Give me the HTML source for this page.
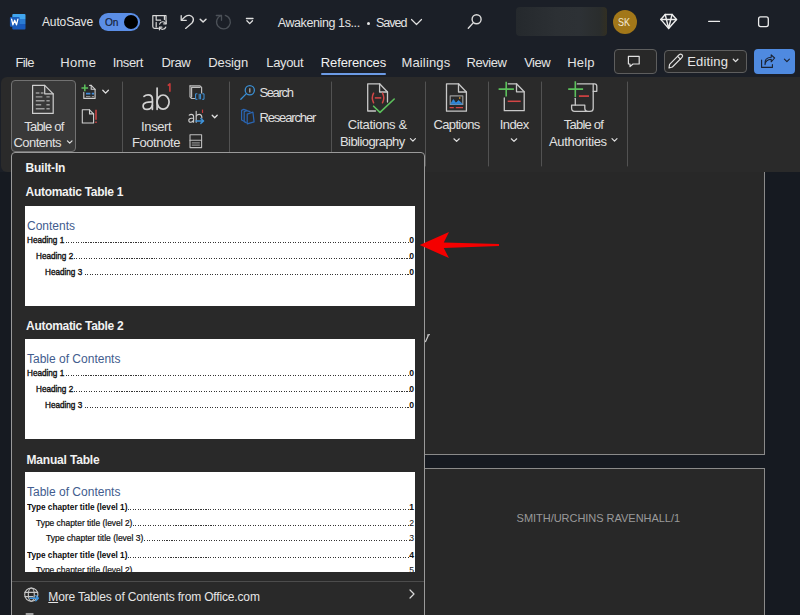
<!DOCTYPE html>
<html><head><meta charset="utf-8">
<style>
*{margin:0;padding:0;box-sizing:border-box}
html,body{width:800px;height:615px;overflow:hidden;background:#1b1f27;font-family:"Liberation Sans",sans-serif;color:#e8e8e8}
.a{position:absolute}
.t{position:absolute;white-space:nowrap;line-height:1}
.tab{position:absolute;white-space:nowrap;line-height:1;font-size:13px;color:#e4e4e4;top:56px}
.rb{position:absolute;white-space:nowrap;line-height:1;font-size:13px;color:#e0e0e0}
.hd{position:absolute;white-space:nowrap;line-height:1;font-size:12px;font-weight:bold;color:#f2f2f2;letter-spacing:-0.2px}
.thumb{position:absolute;left:25px;width:390px;height:100px;background:#fff;overflow:hidden}
.ttl{position:absolute;left:2px;top:14px;font-size:12px;line-height:1;color:#425c8e;white-space:nowrap}
.lbl{position:absolute;font-size:8.6px;line-height:1;color:#0c0c0c;white-space:nowrap;transform-origin:0 0}
.dots{position:absolute;right:5.5px;height:1px;background:repeating-linear-gradient(90deg,#333 0,#333 1px,transparent 1px,transparent 2.5px)}
.num{position:absolute;right:1px;font-size:8.6px;line-height:1;color:#111}
svg{position:absolute;overflow:visible}
</style></head><body>

<!-- title bar -->
<div id="t_autosave1" class="t" style="left:42.00px;top:16px;font-size:12px;color:#e6e6e6;letter-spacing:-0.14px">AutoSave</div>
<div class="a" style="left:99px;top:13px;width:41px;height:18px;border-radius:9px;background:#5b8ee6"></div>
<div id="t_on1" class="t" style="left:104.6px;top:17px;font-size:11px;color:#16223a;transform:scaleX(0.92);transform-origin:0 0;-webkit-text-stroke:0.2px #16223a">On</div>
<div class="a" style="left:124px;top:15px;width:13.5px;height:13.5px;border-radius:7px;background:#000"></div>
<div id="t_awakening11" class="t" style="left:277.70px;top:17px;font-size:12.5px;color:#e4e4e4;letter-spacing:-0.40px">Awakening 1s...</div>
<div class="a" style="left:366.8px;top:21.8px;width:3.4px;height:3.4px;border-radius:2px;background:#e4e4e4"></div>
<div id="t_saved1" class="t" style="left:376.00px;top:17px;font-size:12.5px;color:#e4e4e4;letter-spacing:-1.00px">Saved</div>
<div class="a" style="left:516px;top:7px;width:91px;height:29px;border-radius:4px;background:linear-gradient(90deg,#25292d,#2c3034 45%,#2d3135 70%,#2a2d2d 92%,#322f22)"></div>
<div class="a" style="left:612.5px;top:9.5px;width:24.7px;height:24.7px;border-radius:50%;background:#a27719"></div>
<div id="t_sk1" class="t" style="left:618.2px;top:17px;font-size:10.5px;color:#f3ead6;transform:scaleX(0.86);transform-origin:0 0">SK</div>

<!-- tabs -->
<div id="tab_file1" class="tab" style="left:15.50px;letter-spacing:-0.67px">File</div>
<div id="tab_home1" class="tab" style="left:60.25px;letter-spacing:0.33px">Home</div>
<div id="tab_insert1" class="tab" style="left:112.75px;letter-spacing:-0.40px">Insert</div>
<div id="tab_draw1" class="tab" style="left:161.50px;letter-spacing:-0.42px">Draw</div>
<div id="tab_design1" class="tab" style="left:208.25px;letter-spacing:-0.10px">Design</div>
<div id="tab_layout1" class="tab" style="left:266.25px;letter-spacing:-0.35px">Layout</div>
<div id="tab_references1" class="tab" style="left:320.75px;color:#f2f2f2;letter-spacing:-0.11px">References</div>
<div class="a" style="left:321px;top:72.5px;width:65px;height:2px;border-radius:1px;background:#6c9be6"></div>
<div id="tab_mailings1" class="tab" style="left:401.50px;letter-spacing:0.14px">Mailings</div>
<div id="tab_review1" class="tab" style="left:466.50px;letter-spacing:-0.46px">Review</div>
<div id="tab_view1" class="tab" style="left:524.20px;letter-spacing:-0.50px">View</div>
<div id="tab_help1" class="tab" style="left:567.20px;letter-spacing:0.17px">Help</div>

<!-- right side buttons -->
<div class="a" style="left:614px;top:49px;width:43px;height:25px;border:1px solid #5e5e5e;border-radius:4px;background:#282828"></div>
<div class="a" style="left:664px;top:50px;width:83px;height:23px;border:1px solid #5e5e5e;border-radius:4px;background:#282828"></div>
<div id="t_editing1" class="t" style="left:687.20px;top:54.60px;font-size:13px;color:#e6e6e6;letter-spacing:0.17px">Editing</div>
<div class="a" style="left:754px;top:49px;width:41px;height:25px;border-radius:4px;background:#4f8ae0"></div>

<!-- ribbon -->
<div class="a" style="left:1px;top:77px;width:820px;height:95px;border-radius:6px 0 0 6px;background:#2a2a2a"></div>
<div class="a" style="left:11px;top:80px;width:65px;height:72px;border:1px solid #727272;border-radius:4px;background:#393939"></div>
<div id="rb_tableof1" class="rb" style="left:24.20px;top:120px;letter-spacing:-0.77px">Table of</div>
<div id="rb_contents1" class="rb" style="left:13.50px;top:136px;letter-spacing:-0.57px">Contents</div>
<div id="rb_insert2" class="rb" style="left:141.10px;top:120px;letter-spacing:-0.40px">Insert</div>
<div id="rb_footnote1" class="rb" style="left:131.90px;top:136px;letter-spacing:-0.40px">Footnote</div>
<div id="rb_search1" class="rb" style="left:259.40px;top:86px;letter-spacing:-1.34px">Search</div>
<div id="rb_researcher1" class="rb" style="left:259.40px;top:111px;letter-spacing:-1.14px">Researcher</div>
<div id="rb_citations1" class="rb" style="left:347.70px;top:118px;letter-spacing:-0.34px">Citations &amp;</div>
<div id="rb_bibliograp1" class="rb" style="left:340.00px;top:135px;letter-spacing:-0.57px">Bibliography</div>
<div id="rb_captions1" class="rb" style="left:433.40px;top:118px;letter-spacing:-0.62px">Captions</div>
<div id="rb_index1" class="rb" style="left:499.80px;top:118px;letter-spacing:-0.61px">Index</div>
<div id="rb_tableof2" class="rb" style="left:563.80px;top:118px;letter-spacing:-0.79px">Table of</div>
<div id="rb_authoritie1" class="rb" style="left:549.00px;top:135px;letter-spacing:-0.33px">Authorities</div>

<svg width="800" height="615" style="left:0;top:0" fill="none" stroke-linecap="round" stroke-linejoin="round">
<!-- ribbon: TOC doc -->
<g stroke="#cfcfcf" stroke-width="1.2">
<path d="M44.7,85.3 L32.6,85.3 L32.6,113.4 L53.2,113.4 L53.2,93.8 Z"/>
<path d="M44.7,85.3 L44.7,93.8 L53.2,93.8"/>
</g>
<g stroke="#9c9c9c" stroke-width="1.4" stroke-linecap="butt">
<path d="M35.8,93 L39.4,93 M40.8,93 L43.5,93"/>
<path d="M35.8,96.9 L42.4,96.9 M46.4,96.9 L49.7,96.9"/>
<path d="M35.8,100.8 L44.6,100.8 M46.4,100.8 L49.7,100.8"/>
<path d="M35.8,104.7 L41.2,104.7 M46.4,104.7 L49.7,104.7"/>
<path d="M35.8,108.8 L44.6,108.8 M46.4,108.8 L49.7,108.8"/>
</g>
<!-- add text icon -->
<g stroke="#cfcfcf" stroke-width="1.1">
<path d="M89.6,85.4 L91.2,85.4 L95.1,89.3 L95.1,98.4 L83.8,98.4 L83.8,92.4"/>
<path d="M91.2,85.4 L91.2,89.3 L95.1,89.3"/>
</g>
<path d="M86,93.6 L90.4,93.6 M91.8,93.6 L94,93.6" stroke="#3f8ad8" stroke-width="1.8" stroke-linecap="butt"/><path d="M86,96.6 L90.4,96.6 M91.8,96.6 L94,96.6" stroke="#9a9a9a" stroke-width="1" stroke-linecap="butt"/>
<path d="M84.8,84.6 L84.8,91.2 M81.5,87.9 L88.1,87.9" stroke="#5cc05c" stroke-width="1.5" stroke-linecap="butt"/>
<path d="M102.8,90.3 L105.6,93.1 L108.4,90.3" stroke="#e0e0e0" stroke-width="1.3"/>
<!-- update table -->
<g stroke="#cfcfcf" stroke-width="1.1">
<path d="M82.3,109.8 L89.5,109.8 L93.6,113.9 L93.6,123 L82.3,123 Z"/>
<path d="M89.5,109.8 L89.5,113.9 L93.6,113.9"/>
</g>
<path d="M96,109.8 L96,119.8 M96,121.6 L96,123" stroke="#e04545" stroke-width="1.4" stroke-linecap="butt"/>
<!-- separators -->
<g stroke="#525252" stroke-width="1">
<path d="M122.5,82 L122.5,166 M229.5,82 L229.5,166 M331.5,82 L331.5,166 M425.5,82 L425.5,166 M488.5,82 L488.5,166 M541.5,82 L541.5,166 M627.5,82 L627.5,166"/>
</g>
<!-- ab footnote -->
<g stroke="#d2d2d2" stroke-width="1.7">
<path d="M144,96.4 C145.2,95.3 146.6,94.9 148.1,94.9 C151,94.9 152.4,96.6 152.4,99.4 L152.4,109.3"/>
<path d="M152.4,101.9 L148.4,102.1 C145,102.4 143.1,103.6 143.1,106 C143.1,108.1 144.8,109.4 147.1,109.4 C149.8,109.4 151.7,107.6 152.4,105.2"/>
<path d="M157.1,88.1 L157.1,109.3"/>
<ellipse cx="163.1" cy="102.1" rx="6" ry="7.1"/>
</g>
<path d="M167.8,85.6 L169.9,83.8 L169.9,91.8" stroke="#c83a3a" stroke-width="1.6" stroke-linecap="butt"/>
<!-- insert endnote -->
<g stroke="#bdbdbd" stroke-width="1.2">
<path d="M190,85.8 L200,85.8 L201.6,87.4 L201.6,93"/>
<path d="M190,85.8 L190,96.8 L191.7,98.5 L194.5,98.5"/>
<path d="M191.6,87.4 L200,87.4 M191.6,87.4 L191.6,97"/>
</g>
<g stroke="#3f94dc" stroke-width="1.0" stroke-linecap="butt">
<path d="M197.4,93.8 L195.6,93.8 L195.6,99.3 L197.4,99.3"/>
<path d="M199.2,93.8 L199.2,99.3 M200.6,93.8 L200.6,99.3"/>
<path d="M202.2,93.8 L204,93.8 L204,99.3 L202.2,99.3"/>
</g>
<!-- next footnote ab -->
<g stroke="#cfcfcf" stroke-width="1.1">
<path d="M189.2,115.2 C189.8,114.6 190.5,114.4 191.3,114.4 C192.8,114.4 193.6,115.3 193.6,116.8 L193.6,122.2"/>
<path d="M193.6,118.2 L191.4,118.3 C189.6,118.5 188.8,119.2 188.8,120.4 C188.8,121.5 189.7,122.2 190.9,122.2 C192.4,122.2 193.3,121.2 193.6,120"/>
<path d="M196.2,111.4 L196.2,122.2"/>
<path d="M196.3,116 C197,114.9 198,114.4 199.1,114.4 C200.9,114.4 201.9,115.8 201.9,118"/>
</g>
<path d="M202.5,109.6 L202.5,113" stroke="#c83a3a" stroke-width="1.2" stroke-linecap="butt"/>
<g stroke="#3f94dc" stroke-width="1.4">
<path d="M196,121 L203.6,121 M200.8,118.4 L203.6,121 L200.8,123.4"/>
</g>
<path d="M212.2,115.2 L214.7,117.8 L217.2,115.2" stroke="#e0e0e0" stroke-width="1.3"/>
<!-- show notes -->
<g stroke="#bdbdbd" stroke-width="1.1">
<rect x="190" y="134.8" width="11.6" height="12.8"/>
<path d="M190,140.3 L201.6,140.3"/>
</g>
<path d="M191.8,142.9 L199.8,142.9 M191.8,145.2 L199.8,145.2" stroke="#8a8a8a" stroke-width="1.2" stroke-linecap="butt"/>
<!-- search ribbon -->
<g stroke="#3a8fd4" stroke-width="1.3">
<circle cx="249.8" cy="90.2" r="4.6"/>
<path d="M246.4,93.6 L240.8,99.2"/>
</g>
<path d="M249.8,88.2 L249.8,92.6" stroke="#a8a8a8" stroke-width="1.3" stroke-linecap="butt"/>
<!-- researcher -->
<g stroke="#2a66b4" stroke-width="1.2">
<path d="M243.6,121 L241.6,120 L241.6,110.4 L243.8,109.4 L246.6,110.4"/>
<path d="M246.2,122.6 L244.2,121.6 L244.2,111.6 L246.6,110.6 L250,111.6"/>
<path d="M247.2,114.1 L252.9,112.1 L254.1,121.9 L247.2,123.9 Z"/>
</g>
<!-- citations -->
<g stroke="#c8c8c8" stroke-width="1.3">
<path d="M375.5,111 L367.7,111 L367.7,83.8 L379.6,83.8 L387.5,92 L387.5,102"/>
<path d="M379.6,83.8 L379.6,92 L387.5,92"/>
</g>
<g stroke="#d44646" stroke-width="1.5">
<path d="M373.6,93.2 Q371,98 373.6,102.8"/>
<path d="M382.5,93.2 Q385.1,98 382.5,102.8"/>
<path d="M374.8,97.9 L381.3,97.9" stroke-linecap="butt"/>
</g>
<path d="M373.6,106.2 L380,112.4 L394.2,99" stroke="#5cc05c" stroke-width="1.6"/>
<!-- captions -->
<g stroke="#c8c8c8" stroke-width="1.3">
<path d="M458.5,83.8 L446.5,83.8 L446.5,111.2 L466.4,111.2 L466.4,92 Z"/>
<path d="M458.5,83.8 L458.5,92 L466.4,92"/>
<rect x="450.2" y="95.8" width="12.6" height="8.6" stroke="#9a9a9a" stroke-width="1.2"/>
</g>
<path d="M450.8,103.8 L453.4,99.6 L456.2,103.8 Z M455.2,103.8 L458.6,100.6 L462.2,103.8 Z" fill="#2f88da" stroke="#2f88da" stroke-width="0.8"/>
<path d="M459.8,97 L459.8,99" stroke="#e0a030" stroke-width="1" stroke-linecap="butt"/>
<path d="M449.6,107.6 L453.8,107.6 M455.8,107.6 L463,107.6" stroke="#d44646" stroke-width="1.2" stroke-linecap="butt"/>
<!-- index -->
<g stroke="#c8c8c8" stroke-width="1.3">
<path d="M508.2,83.8 L516.5,83.8 L524.2,91.8 L524.2,110.7 L504.3,110.7 L504.3,98"/>
<path d="M516.5,83.8 L516.5,91.8 L524.2,91.8"/>
</g>
<path d="M498.6,89.1 L513.9,89.1 M506.2,81.7 L506.2,96.5" stroke="#5cc05c" stroke-width="1.6" stroke-linecap="butt"/>
<path d="M507.7,101.3 L520.7,101.3" stroke="#d44646" stroke-width="1.5" stroke-linecap="butt"/>
<!-- TOA -->
<g stroke="#c8c8c8" stroke-width="1.3">
<path d="M577.3,83.9 L594.6,83.9 C596.2,83.9 596.8,85 596.8,86.5 L596.8,91.3 L593.2,91.3"/>
<path d="M593.2,84.2 L593.2,108.4 C593.2,110.4 591.8,111.3 590,111.3 L574.6,111.3 C572.6,111.3 571.6,110 571.6,108 L571.6,105.1 L584.8,105.1 L584.8,108.2 C584.8,110.2 586.2,111.3 588,111.3"/>
<path d="M575.3,98.3 L575.3,105"/>
</g>
<path d="M568.2,89.1 L583.1,89.1 M575.3,81.3 L575.3,96.9" stroke="#5cc05c" stroke-width="1.6" stroke-linecap="butt"/>
<path d="M578.9,96.1 L589,96.1" stroke="#c84040" stroke-width="1.8" stroke-linecap="butt"/>
<!-- ribbon chevrons -->
<g stroke="#e0e0e0" stroke-width="1.2">
<path d="M67.4,140.9 L69.7,143.2 L72,140.9"/>
<path d="M410.4,138.7 L412.9,141.2 L415.4,138.7"/>
<path d="M453.9,138.8 L456.6,141.4 L459.3,138.8"/>
<path d="M511.3,138.8 L514,141.4 L516.7,138.8"/>
<path d="M612,138.7 L614.5,141.2 L617,138.7"/>
</g>
</svg>

<!-- document area -->
<div class="a" style="left:0;top:172px;width:800px;height:443px;background:#161a21"></div>
<div class="a" style="left:300px;top:172px;width:465px;height:283px;background:#282828;border-right:1px solid #8a8a8a;border-bottom:1px solid #8a8a8a"></div>
<div class="a" style="left:300px;top:468px;width:465px;height:160px;background:#282828;border:1px solid #8a8a8a"></div>
<div id="t_smithurchi1" class="t" style="left:516.60px;top:513.00px;font-size:11px;color:#9a9a9a;letter-spacing:-0.03px">SMITH/URCHINS RAVENHALL/1</div>

<!-- dropdown panel -->
<div class="a" style="left:11px;top:152px;width:414px;height:470px;background:#292929;border:1px solid #9a9a9a;border-radius:4px"></div>
<div id="hd_builtin1" class="hd" style="left:25.50px;top:162px;letter-spacing:-0.21px">Built-In</div>
<div id="hd_automatict1" class="hd" style="left:25.50px;top:186px;letter-spacing:-0.28px">Automatic Table 1</div>
<div class="thumb" style="top:206px">
  <div class="ttl">Contents</div>
  <div class="lbl" style="left:2.15px;top:30.20px;font-weight:normal;-webkit-text-stroke:0.35px #111;transform:scaleX(0.95)">Heading 1</div><div class="dots" style="left:38.35px;top:36.20px"></div><div class="num" style="top:30.20px;font-weight:bold">0</div>
  <div class="lbl" style="left:11.40px;top:46.30px;font-weight:normal;-webkit-text-stroke:0.35px #111;transform:scaleX(0.95)">Heading 2</div><div class="dots" style="left:49.30px;top:52.30px"></div><div class="num" style="top:46.30px;font-weight:bold">0</div>
  <div class="lbl" style="left:20.10px;top:61.60px;font-weight:normal;-webkit-text-stroke:0.35px #111;transform:scaleX(0.95)">Heading 3</div><div class="dots" style="left:59.50px;top:67.60px"></div><div class="num" style="top:61.60px;font-weight:bold">0</div>
</div>
<div id="hd_automatict2" class="hd" style="left:26.10px;top:320px;letter-spacing:-0.31px">Automatic Table 2</div>
<div class="thumb" style="top:339px">
  <div class="ttl">Table of Contents</div>
  <div class="lbl" style="left:2.15px;top:30.20px;font-weight:normal;-webkit-text-stroke:0.35px #111;transform:scaleX(0.95)">Heading 1</div><div class="dots" style="left:38.35px;top:36.20px"></div><div class="num" style="top:30.20px;font-weight:bold">0</div>
  <div class="lbl" style="left:11.40px;top:46.30px;font-weight:normal;-webkit-text-stroke:0.35px #111;transform:scaleX(0.95)">Heading 2</div><div class="dots" style="left:49.30px;top:52.30px"></div><div class="num" style="top:46.30px;font-weight:bold">0</div>
  <div class="lbl" style="left:20.10px;top:61.60px;font-weight:normal;-webkit-text-stroke:0.35px #111;transform:scaleX(0.95)">Heading 3</div><div class="dots" style="left:59.50px;top:67.60px"></div><div class="num" style="top:61.60px;font-weight:bold">0</div>
</div>
<div id="hd_manualtabl1" class="hd" style="left:26.50px;top:454px;letter-spacing:-0.18px">Manual Table</div>
<div class="thumb" style="top:472px">
  <div class="ttl">Table of Contents</div>
  <div class="lbl" style="left:2.00px;top:31.10px;font-weight:bold;transform:scaleX(0.957)">Type chapter title (level 1)</div><div class="dots" style="left:102.60px;top:37.10px"></div><div class="num" style="top:31.10px;font-weight:bold">1</div>
  <div class="lbl" style="left:11.10px;top:46.50px;font-weight:normal;-webkit-text-stroke:0.2px #111;transform:scaleX(0.98)">Type chapter title (level 2)</div><div class="dots" style="left:107.90px;top:52.50px"></div><div class="num" style="top:46.50px;font-weight:normal">2</div>
  <div class="lbl" style="left:20.80px;top:62.30px;font-weight:normal;-webkit-text-stroke:0.2px #111;transform:scaleX(0.99)">Type chapter title (level 3)</div><div class="dots" style="left:118.80px;top:68.30px"></div><div class="num" style="top:62.30px;font-weight:normal">3</div>
  <div class="lbl" style="left:2.00px;top:78.50px;font-weight:bold;transform:scaleX(0.957)">Type chapter title (level 1)</div><div class="dots" style="left:102.60px;top:84.50px"></div><div class="num" style="top:78.50px;font-weight:bold">4</div>
  <div class="lbl" style="left:11.10px;top:94.30px;font-weight:normal;-webkit-text-stroke:0.2px #111;transform:scaleX(0.98)">Type chapter title (level 2)</div><div class="dots" style="left:107.90px;top:100.30px"></div><div class="num" style="top:94.30px;font-weight:normal">5</div>
</div>
<div class="a" style="left:12px;top:581px;width:412px;height:1px;background:#4c4c4c"></div>
<div id="t_moretables1" class="t" style="left:48.30px;top:591px;font-size:12px;color:#e6e6e6;letter-spacing:-0.16px"><u>M</u>ore Tables of Contents from Office.com</div>

<!-- icons overlay -->
<svg width="800" height="615" style="left:0;top:0" fill="none" stroke-linecap="round" stroke-linejoin="round">

<!-- word icon -->
<defs>
<linearGradient id="wg" x1="0" y1="0" x2="0" y2="1">
<stop offset="0" stop-color="#41a5ee"/><stop offset="0.33" stop-color="#41a5ee"/>
<stop offset="0.33" stop-color="#2b7cd3"/><stop offset="0.66" stop-color="#2b7cd3"/>
<stop offset="0.66" stop-color="#185abd"/><stop offset="1" stop-color="#185abd"/>
</linearGradient>
</defs>
<rect x="12.3" y="13.9" width="13.2" height="15.6" rx="1" fill="url(#wg)"/>
<rect x="9.9" y="17" width="9.7" height="9.8" rx="1" fill="#1a5cbb"/>
<path d="M11.6,19.2 L12.9,24.8 L14.7,20.2 L16.5,24.8 L17.9,19.2" stroke="#fff" stroke-width="1.3"/>
<!-- save icon -->
<g stroke="#d8d8d8" stroke-width="1.2">
<path d="M158.2,28.4 L154.6,28.4 Q152.8,28.4 152.8,26.6 L152.8,15.7 L166,15.7 L166,21"/>
<path d="M156.2,15.9 L156.2,20.2 L160.6,20.2 M164.4,15.9 L164.4,19.6 M156.2,22.4 L156.2,26.9"/>
<path d="M159.6,24.2 A3.4,3.4 0 0 1 165.9,23.6 M165.8,27 A3.4,3.4 0 0 1 159.6,27.5"/>
<path d="M166.2,21.2 L166.2,23.8 L163.7,23.8 M159.4,29.8 L159.4,27.2 L161.9,27.2"/>
</g>
<!-- undo -->
<g stroke="#dcdcdc" stroke-width="1.3">
<path d="M181.2,15.6 L181.2,20.3 L186.3,20.3"/>
<path d="M181.6,20 L185.4,16.6 C187.8,14.6 191.6,14.9 193,17.8 C193.9,19.8 193.2,21.6 192,23 L185.6,28.4"/>
<path d="M200.2,19.2 L203.1,22 L206,19.2" stroke-width="1.5"/>
</g>
<!-- redo disabled -->
<g stroke="#4b5057" stroke-width="1.3">
<path d="M225.3,15.4 A6.9,6.9 0 1 1 221.3,15.5"/>
<path d="M216.3,15.5 L221.5,15.5 L221.5,20.3"/>
</g>
<!-- customize -->
<g stroke="#e0e0e0" stroke-width="1.3">
<path d="M246.4,18.5 L253,18.5"/>
<path d="M246.9,20.7 L249.7,23.6 L252.5,20.7"/>
</g>
<!-- title chevron -->
<path d="M411.5,19.5 L416.5,24.5 L421.5,19.5" stroke="#e0e0e0" stroke-width="1.2"/>
<!-- search title -->
<g stroke="#dcdcdc" stroke-width="1.4">
<circle cx="476.6" cy="19.3" r="4.5"/>
<path d="M473.4,22.6 L468.3,28.3"/>
</g>
<!-- diamond -->
<g stroke="#ececec" stroke-width="1.45">
<path d="M665.2,14.4 L672.1,14.4 L676.5,19.4 L668.6,28.4 L660.8,19.4 Z"/>
<path d="M660.8,19.4 L676.5,19.4 M665.2,14.4 L666.4,19.4 L668.6,28.4 L670.8,19.4 L672.1,14.4"/>
</g>
<!-- minimize/maximize -->
<path d="M708.7,21.4 L719.5,21.4" stroke="#ececec" stroke-width="1.3"/>
<rect x="758.6" y="16.9" width="9.7" height="9.7" rx="2" stroke="#ececec" stroke-width="1.3"/>
<!-- comment icon -->
<path d="M628.4,56.4 L639.2,56.4 L639.2,64 L633,64 L630,66.6 L630,64 L628.4,64 Z" stroke="#e0e0e0" stroke-width="1.2"/>
<!-- pencil -->
<g stroke="#e0e0e0" stroke-width="1.2">
<path d="M669,68 L669.6,64.3 L679.2,54.7 Q680.6,53.4 682,54.7 Q683.3,56.1 682,57.4 L672.4,67 Z"/>
<path d="M677.6,56.3 L680.5,59.2"/>
</g>
<path d="M733.3,59.3 L735.6,61.6 L737.9,59.3" stroke="#e0e0e0" stroke-width="1.3"/>
<!-- share -->
<g stroke="#1b2230" stroke-width="1.1">
<path d="M761.6,60 L761.6,67.4 L772.4,67.4 L772.4,64.6"/>
<path d="M765,64.6 Q765.4,59.6 771.2,59.2 L771.2,61.8 L774.6,58 L771.2,54.8 L771.2,57.2 Q764,57.6 765,64.6 Z"/>
<path d="M784.4,59.2 L786.9,61.7 L789.4,59.2"/>
</g>


<!-- globe -->
<g stroke="#c8c8c8" stroke-width="1.1">
<circle cx="31.3" cy="594.6" r="6.6"/>
<ellipse cx="31.3" cy="594.6" rx="3" ry="6.6"/>
<path d="M24.9,592.4 L37.7,592.4 M24.9,596.6 L33,596.6"/>
</g>
<path d="M30,598.2 L38.4,598.2 M35.8,595.6 L38.4,598.2 L35.8,600.8" stroke="#3f94dc" stroke-width="1.4"/>
<path d="M410,590 L414,594 L410,598" stroke="#d8d8d8" stroke-width="1.2"/>
<path d="M26.2,614 L33,614" stroke="#c8c8c8" stroke-width="1.3"/>

<!-- page y glyph -->
<path d="M425.6,341.6 L428.4,335.2 M427.6,335 L429.4,334.6" stroke="#cfcfcf" stroke-width="1.2"/>
<!-- arrow -->
<polygon points="419.75,245 449,231.9 443.75,242.5 499,244.1 499,245.9 443.75,248.1 449,258.1" fill="#f50000"/>
</svg>
</body></html>
